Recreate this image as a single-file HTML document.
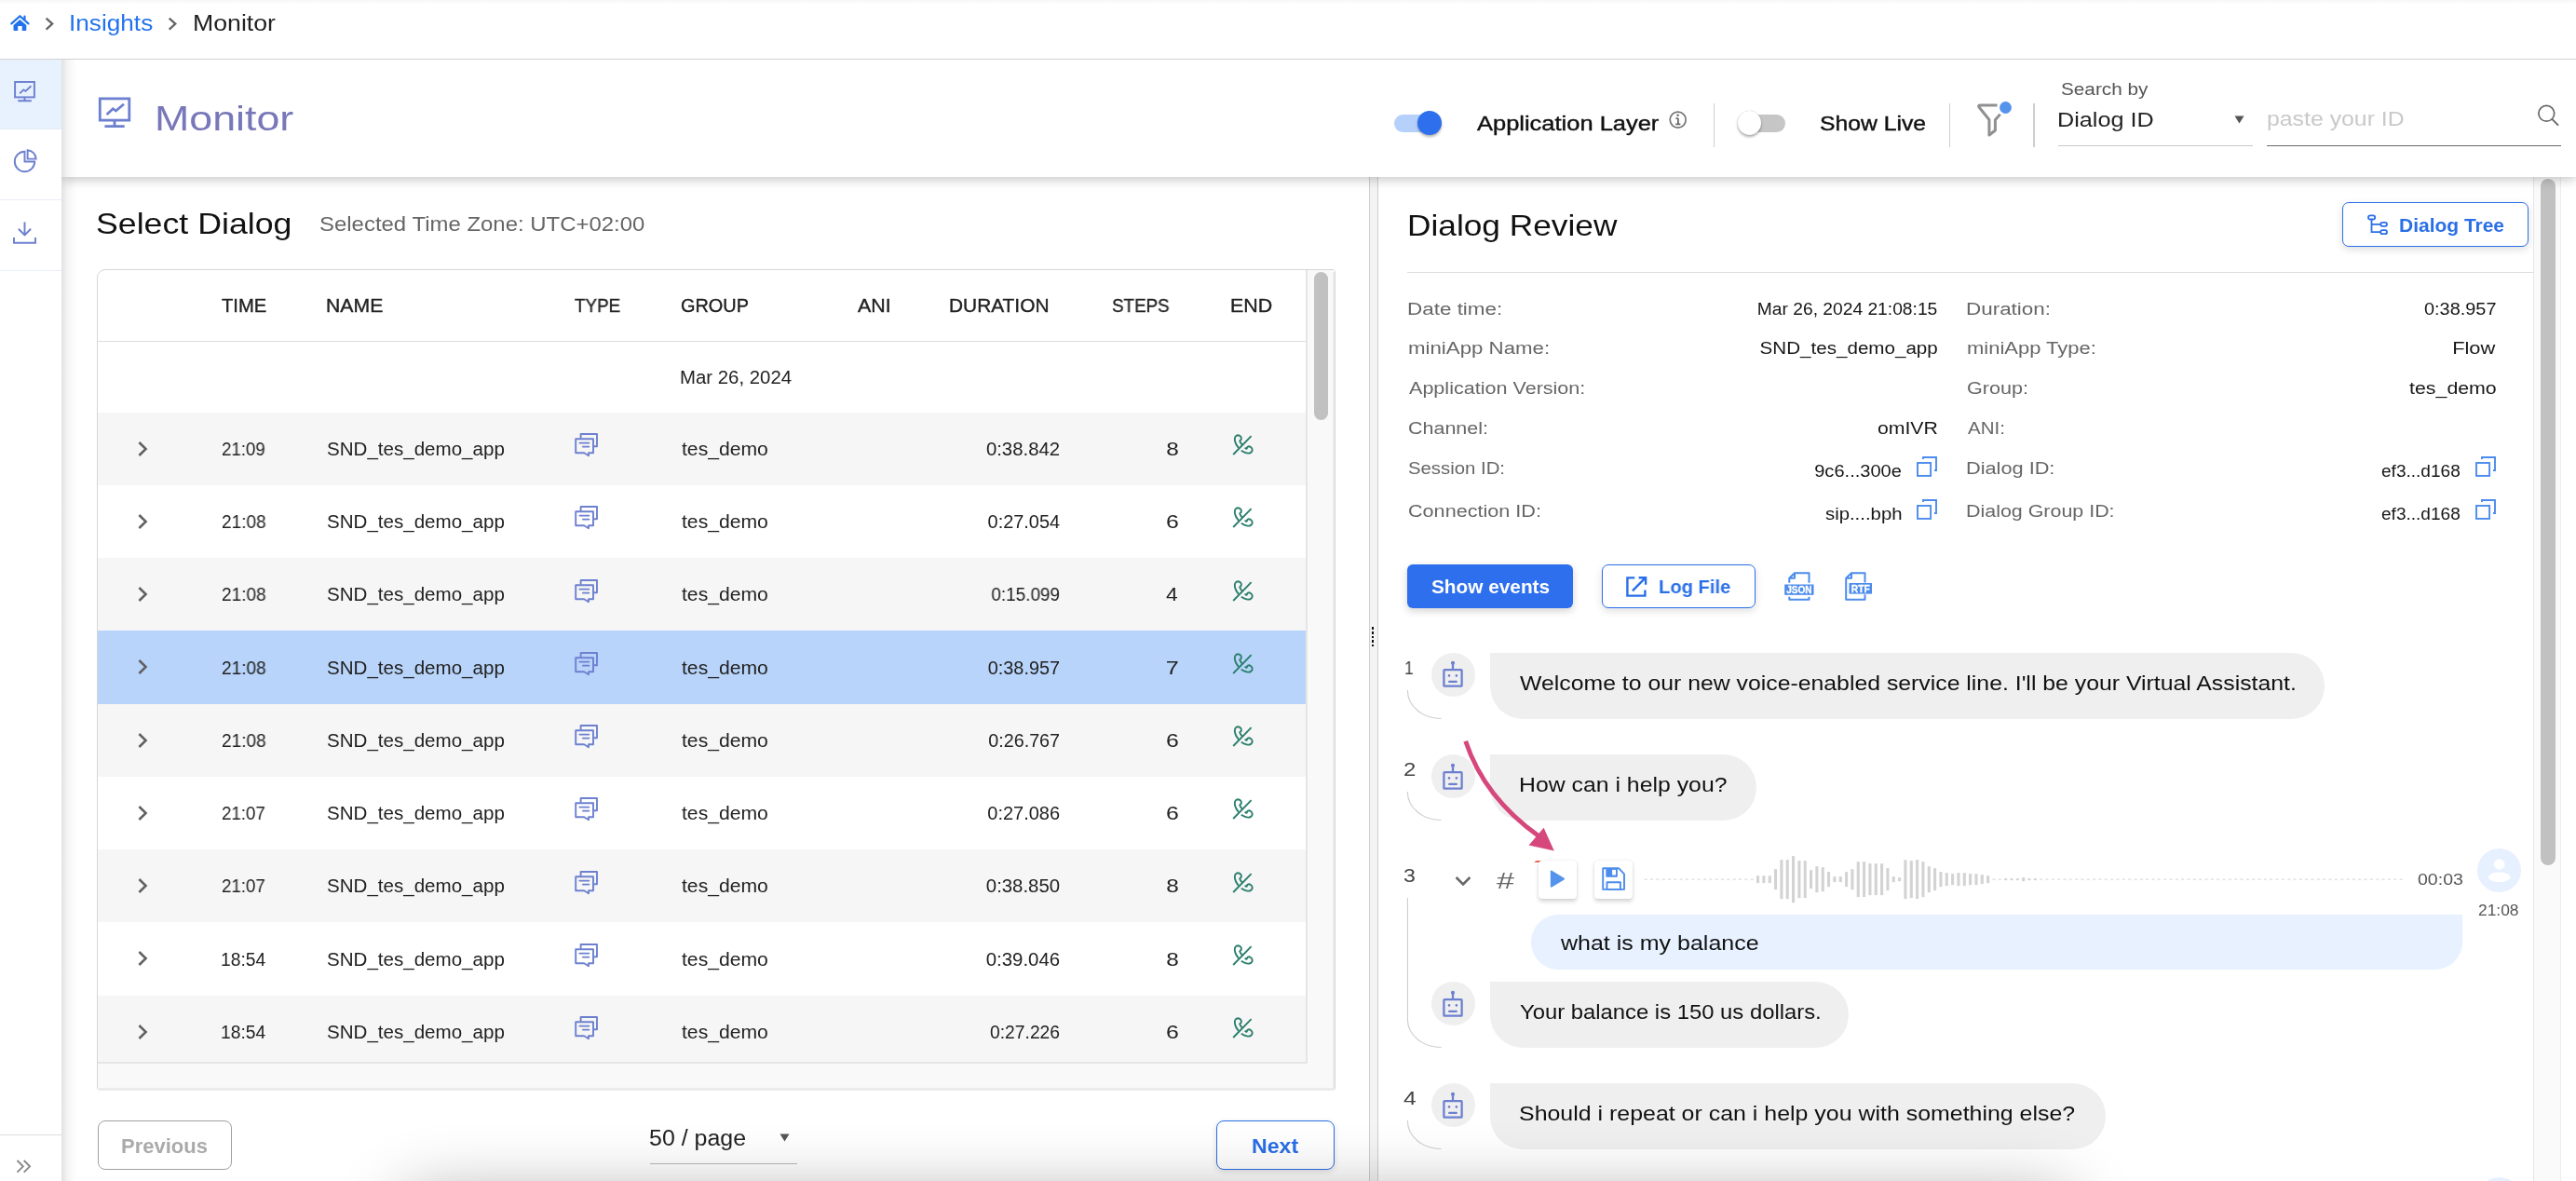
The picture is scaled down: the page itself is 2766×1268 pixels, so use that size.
<!DOCTYPE html>
<html lang="en"><head><meta charset="utf-8"><title>Monitor</title>
<style>
html{font-size:calc(100vw / 2766);}
html,body{margin:0;padding:0;background:#fff;}
body{width:2766rem;height:1268rem;position:relative;overflow:hidden;font-family:"Liberation Sans",sans-serif;}
.t{position:absolute;white-space:nowrap;line-height:1;margin:0;padding:0;will-change:transform;}
.b{position:absolute;box-sizing:border-box;display:block;}
svg{overflow:visible;}
</style></head><body>
<div class="b" style="left:66rem;top:64rem;width:16rem;height:1204rem;background:linear-gradient(90deg,rgba(0,0,0,.115),rgba(0,0,0,.045) 40%,rgba(0,0,0,0));"></div>
<section aria-label="Select Dialog">
<div class="t" style="top:226.00rem;font-size:30.88rem;color:#111;left:102.89rem;transform-origin:0 50%;transform:scaleX(1.1565);">Select Dialog</div>
<div class="t" style="top:230.00rem;font-size:21.71rem;color:#666;left:342.92rem;transform-origin:0 50%;transform:scaleX(1.1033);">Selected Time Zone: UTC+02:00</div>
<div class="b" style="left:104rem;top:289rem;width:1329.5rem;height:882rem;border:1rem solid #d6d6d6;border-radius:9rem 3rem 3rem 3rem;background:#fff;"></div>
<div class="b" style="left:105rem;top:366rem;width:1297.5rem;height:1rem;background:#dedede;"></div>
<div class="t" style="top:319.00rem;font-size:19.3rem;color:#222;-webkit-text-stroke:0.35rem #222;left:238.10rem;transform-origin:0 50%;transform:scaleX(1.0463);">TIME</div>
<div class="t" style="top:319.00rem;font-size:19.3rem;color:#222;-webkit-text-stroke:0.35rem #222;left:350.05rem;transform-origin:0 50%;transform:scaleX(1.0999);">NAME</div>
<div class="t" style="top:319.00rem;font-size:19.3rem;color:#222;-webkit-text-stroke:0.35rem #222;left:616.62rem;transform-origin:0 50%;transform:scaleX(0.9753);">TYPE</div>
<div class="t" style="top:319.00rem;font-size:19.3rem;color:#222;-webkit-text-stroke:0.35rem #222;left:731.00rem;transform-origin:0 50%;transform:scaleX(1.0319);">GROUP</div>
<div class="t" style="top:319.00rem;font-size:19.3rem;color:#222;-webkit-text-stroke:0.35rem #222;left:921.25rem;transform-origin:0 50%;transform:scaleX(1.1085);">ANI</div>
<div class="t" style="top:319.00rem;font-size:19.3rem;color:#222;-webkit-text-stroke:0.35rem #222;left:1019.08rem;transform-origin:0 50%;transform:scaleX(1.0830);">DURATION</div>
<div class="t" style="top:319.00rem;font-size:19.3rem;color:#222;-webkit-text-stroke:0.35rem #222;left:1194.15rem;transform-origin:0 50%;transform:scaleX(0.9745);">STEPS</div>
<div class="t" style="top:319.00rem;font-size:19.3rem;color:#222;-webkit-text-stroke:0.35rem #222;left:1320.79rem;transform-origin:0 50%;transform:scaleX(1.1094);">END</div>
<div class="t" style="top:396.00rem;font-size:19.3rem;color:#222;left:730.37rem;transform-origin:0 50%;transform:scaleX(1.0569);">Mar 26, 2024</div>
<div class="b" style="left:105rem;top:442.5rem;width:1297.5rem;height:78.25rem;background:#f6f6f6;"></div>
<svg class="b" style="left:146rem;top:471.7rem;width:16rem;height:20rem;" viewBox="0 0 16 20"><path d="M3.4 3L10.6 10L3.4 17" fill="none" stroke="#606060" stroke-width="2.5"/></svg>
<div class="t" style="top:473.00rem;font-size:19.3rem;color:#222;left:237.57rem;transform-origin:0 50%;transform:scaleX(0.9685);">21:09</div>
<div class="t" style="top:473.00rem;font-size:19.3rem;color:#222;left:350.82rem;transform-origin:0 50%;transform:scaleX(1.0661);">SND_tes_demo_app</div>
<svg class="b" style="left:617rem;top:465.0rem;width:25rem;height:25rem;" viewBox="0 0 25 25"><g fill="none" stroke="#6d80d0" stroke-width="1.9" stroke-linejoin="round" stroke-linecap="round">
<path d="M6.6 5V1H24V14.3H21.2"/>
<path d="M1.2 6.2H20V21.2H15V24.3L10.2 21.2H1.2Z"/>
<path d="M5.4 10.6H15.4M8.9 14.6H15.4"/>
</g></svg>
<div class="t" style="top:473.00rem;font-size:19.3rem;color:#222;left:731.68rem;transform-origin:0 50%;transform:scaleX(1.0966);">tes_demo</div>
<div class="t" style="top:473.00rem;font-size:19.3rem;color:#222;right:1627.53rem;transform-origin:100% 50%;transform:scaleX(1.0546);">0:38.842</div>
<div class="t" style="top:473.00rem;font-size:19.3rem;color:#222;right:1500.50rem;transform-origin:100% 50%;transform:scaleX(1.2611);">8</div>
<svg class="b" style="left:1315rem;top:460.0rem;width:40rem;height:35rem;" viewBox="0 0 1350 1181"><g fill="none" stroke="#2c7f6c" stroke-width="64" stroke-linecap="butt" stroke-linejoin="round">
<path d="M965 275L310 945"/>
<path d="M505 705C430 610 370 510 365 400C360 300 410 248 480 245C560 245 620 320 600 395L545 450C560 510 600 560 645 595"/>
<path d="M600 800C660 840 740 882 830 897C920 910 1000 860 1002 780C1002 690 900 630 838 662L790 738L728 700"/></g></svg>
<svg class="b" style="left:146rem;top:549.95rem;width:16rem;height:20rem;" viewBox="0 0 16 20"><path d="M3.4 3L10.6 10L3.4 17" fill="none" stroke="#606060" stroke-width="2.5"/></svg>
<div class="t" style="top:551.00rem;font-size:19.3rem;color:#222;left:237.55rem;transform-origin:0 50%;transform:scaleX(0.9879);">21:08</div>
<div class="t" style="top:551.00rem;font-size:19.3rem;color:#222;left:350.82rem;transform-origin:0 50%;transform:scaleX(1.0661);">SND_tes_demo_app</div>
<svg class="b" style="left:617rem;top:543.25rem;width:25rem;height:25rem;" viewBox="0 0 25 25"><g fill="none" stroke="#6d80d0" stroke-width="1.9" stroke-linejoin="round" stroke-linecap="round">
<path d="M6.6 5V1H24V14.3H21.2"/>
<path d="M1.2 6.2H20V21.2H15V24.3L10.2 21.2H1.2Z"/>
<path d="M5.4 10.6H15.4M8.9 14.6H15.4"/>
</g></svg>
<div class="t" style="top:551.00rem;font-size:19.3rem;color:#222;left:731.68rem;transform-origin:0 50%;transform:scaleX(1.0966);">tes_demo</div>
<div class="t" style="top:551.00rem;font-size:19.3rem;color:#222;right:1627.95rem;transform-origin:100% 50%;transform:scaleX(1.0322);">0:27.054</div>
<div class="t" style="top:551.00rem;font-size:19.3rem;color:#222;right:1500.41rem;transform-origin:100% 50%;transform:scaleX(1.2883);">6</div>
<svg class="b" style="left:1315rem;top:538.25rem;width:40rem;height:35rem;" viewBox="0 0 1350 1181"><g fill="none" stroke="#2c7f6c" stroke-width="64" stroke-linecap="butt" stroke-linejoin="round">
<path d="M965 275L310 945"/>
<path d="M505 705C430 610 370 510 365 400C360 300 410 248 480 245C560 245 620 320 600 395L545 450C560 510 600 560 645 595"/>
<path d="M600 800C660 840 740 882 830 897C920 910 1000 860 1002 780C1002 690 900 630 838 662L790 738L728 700"/></g></svg>
<div class="b" style="left:105rem;top:599.0rem;width:1297.5rem;height:78.25rem;background:#f6f6f6;"></div>
<svg class="b" style="left:146rem;top:628.2rem;width:16rem;height:20rem;" viewBox="0 0 16 20"><path d="M3.4 3L10.6 10L3.4 17" fill="none" stroke="#606060" stroke-width="2.5"/></svg>
<div class="t" style="top:629.00rem;font-size:19.3rem;color:#222;left:237.55rem;transform-origin:0 50%;transform:scaleX(0.9879);">21:08</div>
<div class="t" style="top:629.00rem;font-size:19.3rem;color:#222;left:350.82rem;transform-origin:0 50%;transform:scaleX(1.0661);">SND_tes_demo_app</div>
<svg class="b" style="left:617rem;top:621.5rem;width:25rem;height:25rem;" viewBox="0 0 25 25"><g fill="none" stroke="#6d80d0" stroke-width="1.9" stroke-linejoin="round" stroke-linecap="round">
<path d="M6.6 5V1H24V14.3H21.2"/>
<path d="M1.2 6.2H20V21.2H15V24.3L10.2 21.2H1.2Z"/>
<path d="M5.4 10.6H15.4M8.9 14.6H15.4"/>
</g></svg>
<div class="t" style="top:629.00rem;font-size:19.3rem;color:#222;left:731.68rem;transform-origin:0 50%;transform:scaleX(1.0966);">tes_demo</div>
<div class="t" style="top:629.00rem;font-size:19.3rem;color:#222;right:1627.64rem;transform-origin:100% 50%;transform:scaleX(0.9819);">0:15.099</div>
<div class="t" style="top:629.00rem;font-size:19.3rem;color:#222;right:1500.85rem;transform-origin:100% 50%;transform:scaleX(1.1799);">4</div>
<svg class="b" style="left:1315rem;top:616.5rem;width:40rem;height:35rem;" viewBox="0 0 1350 1181"><g fill="none" stroke="#2c7f6c" stroke-width="64" stroke-linecap="butt" stroke-linejoin="round">
<path d="M965 275L310 945"/>
<path d="M505 705C430 610 370 510 365 400C360 300 410 248 480 245C560 245 620 320 600 395L545 450C560 510 600 560 645 595"/>
<path d="M600 800C660 840 740 882 830 897C920 910 1000 860 1002 780C1002 690 900 630 838 662L790 738L728 700"/></g></svg>
<div class="b" style="left:105rem;top:677.25rem;width:1297.5rem;height:78.25rem;background:#b8d4fa;"></div>
<svg class="b" style="left:146rem;top:706.45rem;width:16rem;height:20rem;" viewBox="0 0 16 20"><path d="M3.4 3L10.6 10L3.4 17" fill="none" stroke="#606060" stroke-width="2.5"/></svg>
<div class="t" style="top:708.00rem;font-size:19.3rem;color:#222;left:237.55rem;transform-origin:0 50%;transform:scaleX(0.9879);">21:08</div>
<div class="t" style="top:708.00rem;font-size:19.3rem;color:#222;left:350.82rem;transform-origin:0 50%;transform:scaleX(1.0661);">SND_tes_demo_app</div>
<svg class="b" style="left:617rem;top:699.75rem;width:25rem;height:25rem;" viewBox="0 0 25 25"><g fill="none" stroke="#6d80d0" stroke-width="1.9" stroke-linejoin="round" stroke-linecap="round">
<path d="M6.6 5V1H24V14.3H21.2"/>
<path d="M1.2 6.2H20V21.2H15V24.3L10.2 21.2H1.2Z"/>
<path d="M5.4 10.6H15.4M8.9 14.6H15.4"/>
</g></svg>
<div class="t" style="top:708.00rem;font-size:19.3rem;color:#222;left:731.68rem;transform-origin:0 50%;transform:scaleX(1.0966);">tes_demo</div>
<div class="t" style="top:708.00rem;font-size:19.3rem;color:#222;right:1627.55rem;transform-origin:100% 50%;transform:scaleX(1.0301);">0:38.957</div>
<div class="t" style="top:708.00rem;font-size:19.3rem;color:#222;right:1500.28rem;transform-origin:100% 50%;transform:scaleX(1.3024);">7</div>
<svg class="b" style="left:1315rem;top:694.75rem;width:40rem;height:35rem;" viewBox="0 0 1350 1181"><g fill="none" stroke="#2c7f6c" stroke-width="64" stroke-linecap="butt" stroke-linejoin="round">
<path d="M965 275L310 945"/>
<path d="M505 705C430 610 370 510 365 400C360 300 410 248 480 245C560 245 620 320 600 395L545 450C560 510 600 560 645 595"/>
<path d="M600 800C660 840 740 882 830 897C920 910 1000 860 1002 780C1002 690 900 630 838 662L790 738L728 700"/></g></svg>
<div class="b" style="left:105rem;top:755.5rem;width:1297.5rem;height:78.25rem;background:#f6f6f6;"></div>
<svg class="b" style="left:146rem;top:784.7rem;width:16rem;height:20rem;" viewBox="0 0 16 20"><path d="M3.4 3L10.6 10L3.4 17" fill="none" stroke="#606060" stroke-width="2.5"/></svg>
<div class="t" style="top:786.00rem;font-size:19.3rem;color:#222;left:237.55rem;transform-origin:0 50%;transform:scaleX(0.9879);">21:08</div>
<div class="t" style="top:786.00rem;font-size:19.3rem;color:#222;left:350.82rem;transform-origin:0 50%;transform:scaleX(1.0661);">SND_tes_demo_app</div>
<svg class="b" style="left:617rem;top:778.0rem;width:25rem;height:25rem;" viewBox="0 0 25 25"><g fill="none" stroke="#6d80d0" stroke-width="1.9" stroke-linejoin="round" stroke-linecap="round">
<path d="M6.6 5V1H24V14.3H21.2"/>
<path d="M1.2 6.2H20V21.2H15V24.3L10.2 21.2H1.2Z"/>
<path d="M5.4 10.6H15.4M8.9 14.6H15.4"/>
</g></svg>
<div class="t" style="top:786.00rem;font-size:19.3rem;color:#222;left:731.68rem;transform-origin:0 50%;transform:scaleX(1.0966);">tes_demo</div>
<div class="t" style="top:786.00rem;font-size:19.3rem;color:#222;right:1627.56rem;transform-origin:100% 50%;transform:scaleX(1.0233);">0:26.767</div>
<div class="t" style="top:786.00rem;font-size:19.3rem;color:#222;right:1500.41rem;transform-origin:100% 50%;transform:scaleX(1.2883);">6</div>
<svg class="b" style="left:1315rem;top:773.0rem;width:40rem;height:35rem;" viewBox="0 0 1350 1181"><g fill="none" stroke="#2c7f6c" stroke-width="64" stroke-linecap="butt" stroke-linejoin="round">
<path d="M965 275L310 945"/>
<path d="M505 705C430 610 370 510 365 400C360 300 410 248 480 245C560 245 620 320 600 395L545 450C560 510 600 560 645 595"/>
<path d="M600 800C660 840 740 882 830 897C920 910 1000 860 1002 780C1002 690 900 630 838 662L790 738L728 700"/></g></svg>
<svg class="b" style="left:146rem;top:862.95rem;width:16rem;height:20rem;" viewBox="0 0 16 20"><path d="M3.4 3L10.6 10L3.4 17" fill="none" stroke="#606060" stroke-width="2.5"/></svg>
<div class="t" style="top:864.00rem;font-size:19.3rem;color:#222;left:237.56rem;transform-origin:0 50%;transform:scaleX(0.9695);">21:07</div>
<div class="t" style="top:864.00rem;font-size:19.3rem;color:#222;left:350.82rem;transform-origin:0 50%;transform:scaleX(1.0661);">SND_tes_demo_app</div>
<svg class="b" style="left:617rem;top:856.25rem;width:25rem;height:25rem;" viewBox="0 0 25 25"><g fill="none" stroke="#6d80d0" stroke-width="1.9" stroke-linejoin="round" stroke-linecap="round">
<path d="M6.6 5V1H24V14.3H21.2"/>
<path d="M1.2 6.2H20V21.2H15V24.3L10.2 21.2H1.2Z"/>
<path d="M5.4 10.6H15.4M8.9 14.6H15.4"/>
</g></svg>
<div class="t" style="top:864.00rem;font-size:19.3rem;color:#222;left:731.68rem;transform-origin:0 50%;transform:scaleX(1.0966);">tes_demo</div>
<div class="t" style="top:864.00rem;font-size:19.3rem;color:#222;right:1627.65rem;transform-origin:100% 50%;transform:scaleX(1.0356);">0:27.086</div>
<div class="t" style="top:864.00rem;font-size:19.3rem;color:#222;right:1500.41rem;transform-origin:100% 50%;transform:scaleX(1.2883);">6</div>
<svg class="b" style="left:1315rem;top:851.25rem;width:40rem;height:35rem;" viewBox="0 0 1350 1181"><g fill="none" stroke="#2c7f6c" stroke-width="64" stroke-linecap="butt" stroke-linejoin="round">
<path d="M965 275L310 945"/>
<path d="M505 705C430 610 370 510 365 400C360 300 410 248 480 245C560 245 620 320 600 395L545 450C560 510 600 560 645 595"/>
<path d="M600 800C660 840 740 882 830 897C920 910 1000 860 1002 780C1002 690 900 630 838 662L790 738L728 700"/></g></svg>
<div class="b" style="left:105rem;top:912.0rem;width:1297.5rem;height:78.25rem;background:#f6f6f6;"></div>
<svg class="b" style="left:146rem;top:941.2rem;width:16rem;height:20rem;" viewBox="0 0 16 20"><path d="M3.4 3L10.6 10L3.4 17" fill="none" stroke="#606060" stroke-width="2.5"/></svg>
<div class="t" style="top:942.00rem;font-size:19.3rem;color:#222;left:237.56rem;transform-origin:0 50%;transform:scaleX(0.9695);">21:07</div>
<div class="t" style="top:942.00rem;font-size:19.3rem;color:#222;left:350.82rem;transform-origin:0 50%;transform:scaleX(1.0661);">SND_tes_demo_app</div>
<svg class="b" style="left:617rem;top:934.5rem;width:25rem;height:25rem;" viewBox="0 0 25 25"><g fill="none" stroke="#6d80d0" stroke-width="1.9" stroke-linejoin="round" stroke-linecap="round">
<path d="M6.6 5V1H24V14.3H21.2"/>
<path d="M1.2 6.2H20V21.2H15V24.3L10.2 21.2H1.2Z"/>
<path d="M5.4 10.6H15.4M8.9 14.6H15.4"/>
</g></svg>
<div class="t" style="top:942.00rem;font-size:19.3rem;color:#222;left:731.68rem;transform-origin:0 50%;transform:scaleX(1.0966);">tes_demo</div>
<div class="t" style="top:942.00rem;font-size:19.3rem;color:#222;right:1627.73rem;transform-origin:100% 50%;transform:scaleX(1.0559);">0:38.850</div>
<div class="t" style="top:942.00rem;font-size:19.3rem;color:#222;right:1500.50rem;transform-origin:100% 50%;transform:scaleX(1.2611);">8</div>
<svg class="b" style="left:1315rem;top:929.5rem;width:40rem;height:35rem;" viewBox="0 0 1350 1181"><g fill="none" stroke="#2c7f6c" stroke-width="64" stroke-linecap="butt" stroke-linejoin="round">
<path d="M965 275L310 945"/>
<path d="M505 705C430 610 370 510 365 400C360 300 410 248 480 245C560 245 620 320 600 395L545 450C560 510 600 560 645 595"/>
<path d="M600 800C660 840 740 882 830 897C920 910 1000 860 1002 780C1002 690 900 630 838 662L790 738L728 700"/></g></svg>
<svg class="b" style="left:146rem;top:1019.45rem;width:16rem;height:20rem;" viewBox="0 0 16 20"><path d="M3.4 3L10.6 10L3.4 17" fill="none" stroke="#606060" stroke-width="2.5"/></svg>
<div class="t" style="top:1021.00rem;font-size:19.3rem;color:#222;left:237.06rem;transform-origin:0 50%;">18:54</div>
<div class="t" style="top:1021.00rem;font-size:19.3rem;color:#222;left:350.82rem;transform-origin:0 50%;transform:scaleX(1.0661);">SND_tes_demo_app</div>
<svg class="b" style="left:617rem;top:1012.75rem;width:25rem;height:25rem;" viewBox="0 0 25 25"><g fill="none" stroke="#6d80d0" stroke-width="1.9" stroke-linejoin="round" stroke-linecap="round">
<path d="M6.6 5V1H24V14.3H21.2"/>
<path d="M1.2 6.2H20V21.2H15V24.3L10.2 21.2H1.2Z"/>
<path d="M5.4 10.6H15.4M8.9 14.6H15.4"/>
</g></svg>
<div class="t" style="top:1021.00rem;font-size:19.3rem;color:#222;left:731.68rem;transform-origin:0 50%;transform:scaleX(1.0966);">tes_demo</div>
<div class="t" style="top:1021.00rem;font-size:19.3rem;color:#222;right:1627.63rem;transform-origin:100% 50%;transform:scaleX(1.0573);">0:39.046</div>
<div class="t" style="top:1021.00rem;font-size:19.3rem;color:#222;right:1500.50rem;transform-origin:100% 50%;transform:scaleX(1.2611);">8</div>
<svg class="b" style="left:1315rem;top:1007.75rem;width:40rem;height:35rem;" viewBox="0 0 1350 1181"><g fill="none" stroke="#2c7f6c" stroke-width="64" stroke-linecap="butt" stroke-linejoin="round">
<path d="M965 275L310 945"/>
<path d="M505 705C430 610 370 510 365 400C360 300 410 248 480 245C560 245 620 320 600 395L545 450C560 510 600 560 645 595"/>
<path d="M600 800C660 840 740 882 830 897C920 910 1000 860 1002 780C1002 690 900 630 838 662L790 738L728 700"/></g></svg>
<div class="b" style="left:105rem;top:1068.5rem;width:1297.5rem;height:71.5rem;background:#f6f6f6;"></div>
<svg class="b" style="left:146rem;top:1097.7rem;width:16rem;height:20rem;" viewBox="0 0 16 20"><path d="M3.4 3L10.6 10L3.4 17" fill="none" stroke="#606060" stroke-width="2.5"/></svg>
<div class="t" style="top:1099.00rem;font-size:19.3rem;color:#222;left:237.06rem;transform-origin:0 50%;">18:54</div>
<div class="t" style="top:1099.00rem;font-size:19.3rem;color:#222;left:350.82rem;transform-origin:0 50%;transform:scaleX(1.0661);">SND_tes_demo_app</div>
<svg class="b" style="left:617rem;top:1091.0rem;width:25rem;height:25rem;" viewBox="0 0 25 25"><g fill="none" stroke="#6d80d0" stroke-width="1.9" stroke-linejoin="round" stroke-linecap="round">
<path d="M6.6 5V1H24V14.3H21.2"/>
<path d="M1.2 6.2H20V21.2H15V24.3L10.2 21.2H1.2Z"/>
<path d="M5.4 10.6H15.4M8.9 14.6H15.4"/>
</g></svg>
<div class="t" style="top:1099.00rem;font-size:19.3rem;color:#222;left:731.68rem;transform-origin:0 50%;transform:scaleX(1.0966);">tes_demo</div>
<div class="t" style="top:1099.00rem;font-size:19.3rem;color:#222;right:1627.68rem;transform-origin:100% 50%;">0:27.226</div>
<div class="t" style="top:1099.00rem;font-size:19.3rem;color:#222;right:1500.41rem;transform-origin:100% 50%;transform:scaleX(1.2883);">6</div>
<svg class="b" style="left:1315rem;top:1086.0rem;width:40rem;height:35rem;" viewBox="0 0 1350 1181"><g fill="none" stroke="#2c7f6c" stroke-width="64" stroke-linecap="butt" stroke-linejoin="round">
<path d="M965 275L310 945"/>
<path d="M505 705C430 610 370 510 365 400C360 300 410 248 480 245C560 245 620 320 600 395L545 450C560 510 600 560 645 595"/>
<path d="M600 800C660 840 740 882 830 897C920 910 1000 860 1002 780C1002 690 900 630 838 662L790 738L728 700"/></g></svg>
<div class="b" style="left:105rem;top:1140rem;width:1327.5rem;height:30rem;background:#f9f9f9;"></div>
<div class="b" style="left:1402rem;top:290rem;width:30.5rem;height:851rem;background:#f9f9f9;"></div>
<div class="b" style="left:1401.7rem;top:290rem;width:1.9rem;height:851.6rem;background:#e5e5e5;"></div>
<div class="b" style="left:105rem;top:1139.8rem;width:1298.6rem;height:1.9rem;background:#e5e5e5;"></div>
<div class="b" style="left:1430.6rem;top:292rem;width:2.4rem;height:878rem;background:#ebebeb;"></div>
<div class="b" style="left:106rem;top:1168.4rem;width:1327rem;height:2.4rem;background:#ebebeb;"></div>
<div class="b" style="left:1410.5rem;top:292rem;width:15.5rem;height:158.5rem;background:#c1c1c1;border-radius:8rem;"></div>
<div class="b" style="left:104.5rem;top:1203rem;width:144.5rem;height:52.5rem;border:1.6rem solid #a0a0a0;border-radius:8rem;background:#fff;"></div>
<div class="t" style="top:1220.00rem;font-size:21.67rem;color:#aaa;font-weight:700;left:129.57rem;transform-origin:0 50%;transform:scaleX(1.0165);">Previous</div>
<div class="t" style="top:1211.00rem;font-size:23.16rem;color:#222;left:697.00rem;transform-origin:0 50%;transform:scaleX(1.0775);">50 / page</div>
<svg class="b" style="left:837rem;top:1217rem;width:11rem;height:9rem;" viewBox="0 0 11 9"><path d="M0.5 0.5H10.5L5.5 8.5Z" fill="#555"/></svg>
<div class="b" style="left:698rem;top:1248.5rem;width:158rem;height:1rem;background:#b8b8b8;"></div>
<div class="b" style="left:1306rem;top:1203rem;width:126.5rem;height:52.5rem;border:1.3rem solid #2a6fe8;border-radius:8rem;background:#fff;box-shadow:0 2rem 6rem rgba(0,0,0,.12);"></div>
<div class="t" style="top:1220.00rem;font-size:21.67rem;color:#2a6fe8;font-weight:700;left:1343.90rem;transform-origin:0 50%;transform:scaleX(1.0674);">Next</div>
</section>
<div class="b" style="left:1470rem;top:190rem;width:10rem;height:1078rem;background:#f4f4f4;border-left:1rem solid #cfcfcf;border-right:1rem solid #cfcfcf;"></div>
<div class="b" style="left:1472.6rem;top:673.3rem;width:2.8rem;height:2.8rem;background:#111;"></div>
<div class="b" style="left:1472.6rem;top:677.9rem;width:2.8rem;height:2.8rem;background:#111;"></div>
<div class="b" style="left:1472.6rem;top:682.5rem;width:2.8rem;height:2.8rem;background:#111;"></div>
<div class="b" style="left:1472.6rem;top:687.0999999999999rem;width:2.8rem;height:2.8rem;background:#111;"></div>
<div class="b" style="left:1472.6rem;top:691.6999999999999rem;width:2.8rem;height:2.8rem;background:#111;"></div>
<section aria-label="Dialog Review">
<div class="t" style="top:228.00rem;font-size:30.88rem;color:#111;left:1511.38rem;transform-origin:0 50%;transform:scaleX(1.1423);">Dialog Review</div>
<div class="b" style="left:2515rem;top:217rem;width:200rem;height:47.7rem;border:1.2rem solid #2a6fe8;border-radius:7rem;background:#fff;box-shadow:0 3rem 8rem rgba(0,0,0,.13);"></div>
<svg class="b" style="left:2540rem;top:228rem;width:26rem;height:26rem;" viewBox="2540 228 26 26"><g fill="none" stroke="#2a6fe8" stroke-width="1.8">
<rect x="2543" y="231.3" width="7.2" height="4.2" rx="2.1"/>
<rect x="2556.2" y="238.8" width="6.8" height="4" rx="2"/>
<rect x="2556.2" y="247.2" width="6.8" height="4" rx="2"/>
<path d="M2546.5 235.5V249.2H2556.2M2546.5 240.8H2556.2"/></g></svg>
<div class="t" style="top:232.00rem;font-size:20.68rem;color:#2a6fe8;font-weight:700;left:2576.14rem;transform-origin:0 50%;transform:scaleX(1.0142);">Dialog Tree</div>
<div class="b" style="left:1511rem;top:292rem;width:1209rem;height:1rem;background:#dedede;"></div>
<div class="t" style="top:323.00rem;font-size:18.62rem;color:#666;left:1511.20rem;transform-origin:0 50%;transform:scaleX(1.2057);">Date time:</div>
<div class="t" style="top:323.00rem;font-size:18.62rem;color:#161616;right:685.71rem;transform-origin:100% 50%;transform:scaleX(1.0331);">Mar 26, 2024 21:08:15</div>
<div class="t" style="top:323.00rem;font-size:18.62rem;color:#666;left:2111.20rem;transform-origin:0 50%;transform:scaleX(1.2054);">Duration:</div>
<div class="t" style="top:323.00rem;font-size:18.62rem;color:#161616;right:85.55rem;transform-origin:100% 50%;transform:scaleX(1.0685);">0:38.957</div>
<div class="t" style="top:365.00rem;font-size:18.62rem;color:#666;left:1511.55rem;transform-origin:0 50%;transform:scaleX(1.1959);">miniApp Name:</div>
<div class="t" style="top:365.00rem;font-size:18.62rem;color:#161616;right:685.65rem;transform-origin:100% 50%;transform:scaleX(1.1065);">SND_tes_demo_app</div>
<div class="t" style="top:365.00rem;font-size:18.62rem;color:#666;left:2111.57rem;transform-origin:0 50%;transform:scaleX(1.1809);">miniApp Type:</div>
<div class="t" style="top:365.00rem;font-size:18.62rem;color:#161616;right:86.58rem;transform-origin:100% 50%;transform:scaleX(1.1744);">Flow</div>
<div class="t" style="top:408.00rem;font-size:18.62rem;color:#666;left:1513.00rem;transform-origin:0 50%;transform:scaleX(1.1584);">Application Version:</div>
<div class="t" style="top:408.00rem;font-size:18.62rem;color:#666;left:2111.92rem;transform-origin:0 50%;transform:scaleX(1.1597);">Group:</div>
<div class="t" style="top:408.00rem;font-size:18.62rem;color:#161616;right:85.61rem;transform-origin:100% 50%;transform:scaleX(1.1460);">tes_demo</div>
<div class="t" style="top:451.00rem;font-size:18.62rem;color:#666;left:1511.93rem;transform-origin:0 50%;transform:scaleX(1.1541);">Channel:</div>
<div class="t" style="top:451.00rem;font-size:18.62rem;color:#161616;right:685.57rem;transform-origin:100% 50%;transform:scaleX(1.1428);">omIVR</div>
<div class="t" style="top:451.00rem;font-size:18.62rem;color:#666;left:2113.00rem;transform-origin:0 50%;transform:scaleX(1.1002);">ANI:</div>
<div class="t" style="top:494.00rem;font-size:18.62rem;color:#666;left:1512.08rem;transform-origin:0 50%;transform:scaleX(1.0925);">Session ID:</div>
<div class="t" style="top:497.00rem;font-size:18.62rem;color:#161616;right:723.88rem;transform-origin:100% 50%;transform:scaleX(1.0782);">9c6...300e</div>
<svg class="b" style="left:2058rem;top:490rem;width:22rem;height:22rem;" viewBox="0 0 22 22"><g fill="none" stroke="#4c8cec" stroke-width="1.9"><rect x="1" y="7" width="14.1" height="13.9"/><path d="M7 2.9V1H21V15H19"/></g></svg>
<div class="t" style="top:494.00rem;font-size:18.62rem;color:#666;left:2111.26rem;transform-origin:0 50%;transform:scaleX(1.1677);">Dialog ID:</div>
<div class="t" style="top:497.00rem;font-size:18.62rem;color:#161616;right:123.97rem;transform-origin:100% 50%;transform:scaleX(1.0243);">ef3...d168</div>
<svg class="b" style="left:2658rem;top:490rem;width:22rem;height:22rem;" viewBox="0 0 22 22"><g fill="none" stroke="#4c8cec" stroke-width="1.9"><rect x="1" y="7" width="14.1" height="13.9"/><path d="M7 2.9V1H21V15H19"/></g></svg>
<div class="t" style="top:540.00rem;font-size:18.62rem;color:#666;left:1511.92rem;transform-origin:0 50%;transform:scaleX(1.1612);">Connection ID:</div>
<div class="t" style="top:543.00rem;font-size:18.62rem;color:#161616;right:723.46rem;transform-origin:100% 50%;transform:scaleX(1.0931);">sip....bph</div>
<svg class="b" style="left:2058rem;top:536.25rem;width:22rem;height:22rem;" viewBox="0 0 22 22"><g fill="none" stroke="#4c8cec" stroke-width="1.9"><rect x="1" y="7" width="14.1" height="13.9"/><path d="M7 2.9V1H21V15H19"/></g></svg>
<div class="t" style="top:540.00rem;font-size:18.62rem;color:#666;left:2111.29rem;transform-origin:0 50%;transform:scaleX(1.1512);">Dialog Group ID:</div>
<div class="t" style="top:543.00rem;font-size:18.62rem;color:#161616;right:123.97rem;transform-origin:100% 50%;transform:scaleX(1.0243);">ef3...d168</div>
<svg class="b" style="left:2658rem;top:536.25rem;width:22rem;height:22rem;" viewBox="0 0 22 22"><g fill="none" stroke="#4c8cec" stroke-width="1.9"><rect x="1" y="7" width="14.1" height="13.9"/><path d="M7 2.9V1H21V15H19"/></g></svg>
<div class="b" style="left:1511rem;top:606.2rem;width:178rem;height:46.6rem;background:#2d6fec;border-radius:6rem;box-shadow:0 3rem 8rem rgba(0,0,0,.18);"></div>
<div class="t" style="top:620.00rem;font-size:20.68rem;color:#fff;font-weight:700;left:1536.73rem;transform-origin:0 50%;transform:scaleX(1.0059);">Show events</div>
<div class="b" style="left:1720.2rem;top:606.2rem;width:164.7rem;height:46.6rem;border:1.2rem solid #2a6fe8;border-radius:7rem;background:#fff;box-shadow:0 3rem 8rem rgba(0,0,0,.13);"></div>
<svg class="b" style="left:1744rem;top:617rem;width:26rem;height:26rem;" viewBox="1744 617 26 26"><g fill="none" stroke="#2a6fe8" stroke-width="2.4"><path d="M1755.3 620.4H1747.4V639.6H1766.4V633.4"/><path d="M1752.9 634.3L1767 620.2M1759.6 620.3H1767.1V627.8"/></g></svg>
<div class="t" style="top:620.00rem;font-size:20.68rem;color:#2a6fe8;font-weight:700;left:1781.39rem;transform-origin:0 50%;transform:scaleX(0.9749);">Log File</div>
<svg class="b" style="left:1914rem;top:612rem;width:36rem;height:35rem;will-change:transform;" viewBox="1914 612 36 35"><g fill="none" stroke="#4c8cec" stroke-width="2" stroke-linejoin="round">
<path d="M1921.3 625.8V620.8L1927 615.3H1942.5V625.8M1921.3 620.8H1927V615.3"/>
<path d="M1921.3 640.8V643.8H1942.5V640.8"/></g>
<rect x="1916.2" y="627.5" width="31.3" height="11.3" fill="#4c8cec"/>
<text x="1931.9" y="637" text-anchor="middle" font-family="'Liberation Sans', sans-serif" font-weight="700" font-size="10" fill="#fff" stroke="#fff" stroke-width="0.3" textLength="27.5" lengthAdjust="spacingAndGlyphs">JSON</text></svg>
<svg class="b" style="left:1978rem;top:612rem;width:36rem;height:35rem;will-change:transform;" viewBox="1978 612 36 35"><g fill="none" stroke="#4c8cec" stroke-width="2" stroke-linejoin="round">
<path d="M2002.5 625.5V615.3H1988L1982.2 620.8V643.8H2002.5V638.2M1982.2 620.8H1988V615.3"/></g>
<rect x="1985.5" y="626" width="24.5" height="11.6" fill="#4c8cec"/>
<text x="1997.8" y="635.7" text-anchor="middle" font-family="'Liberation Sans', sans-serif" font-weight="700" font-size="10" fill="#fff" stroke="#fff" stroke-width="0.3" textLength="20" lengthAdjust="spacingAndGlyphs">RTF</text></svg>
<div class="t" style="top:708.00rem;font-size:19.3rem;color:#444;left:1507.50rem;transform-origin:0 50%;transform:scaleX(0.8985);">1</div>
<div class="b" style="left:1537.0rem;top:701.0rem;width:46.8rem;height:46.8rem;background:#efefef;border-radius:50%;"></div>
<svg class="b" style="left:1546.4rem;top:707.4rem;width:28rem;height:34rem;" viewBox="1546.2 707.4 28 34"><g fill="none" stroke="#6d80d0" stroke-width="2.3">
<rect x="1550.6" y="719.5" width="19.2" height="17.6" rx="0.8"/><path d="M1560.2 713V719.6"/><path d="M1556.4 732.3H1564" stroke-linecap="round"/></g>
<circle cx="1560.2" cy="712.2" r="2.1" fill="#6d80d0"/><circle cx="1556.2" cy="725.8" r="1.3" fill="#6d80d0"/><circle cx="1564.1" cy="725.8" r="1.3" fill="#6d80d0"/></svg>
<div class="b" style="left:1600rem;top:700.9rem;width:895.5rem;height:70.8rem;background:#efefef;border-radius:0 35.4rem 35.4rem 35.4rem;"></div>
<div class="t" style="top:723.00rem;font-size:22.2rem;color:#111;left:1632.44rem;transform-origin:0 50%;transform:scaleX(1.1180);">Welcome to our new voice-enabled service line. I'll be your Virtual Assistant.</div>
<svg class="b" style="left:1505rem;top:739rem;width:50rem;height:36.5rem;" viewBox="1505 739 50 36.5"><path d="M1511.4 741V741.5A36 30 0 0 0 1547.5 771.5" fill="none" stroke="#cdcdcd" stroke-width="1.1"/></svg>
<div class="t" style="top:817.00rem;font-size:19.3rem;color:#444;left:1506.80rem;transform-origin:0 50%;transform:scaleX(1.2458);">2</div>
<div class="b" style="left:1537.0rem;top:810.1rem;width:46.8rem;height:46.8rem;background:#efefef;border-radius:50%;"></div>
<svg class="b" style="left:1546.4rem;top:816.5rem;width:28rem;height:34rem;" viewBox="1546.2 707.4 28 34"><g fill="none" stroke="#6d80d0" stroke-width="2.3">
<rect x="1550.6" y="719.5" width="19.2" height="17.6" rx="0.8"/><path d="M1560.2 713V719.6"/><path d="M1556.4 732.3H1564" stroke-linecap="round"/></g>
<circle cx="1560.2" cy="712.2" r="2.1" fill="#6d80d0"/><circle cx="1556.2" cy="725.8" r="1.3" fill="#6d80d0"/><circle cx="1564.1" cy="725.8" r="1.3" fill="#6d80d0"/></svg>
<div class="b" style="left:1600rem;top:810rem;width:285.75rem;height:70.8rem;background:#efefef;border-radius:0 35.4rem 35.4rem 35.4rem;"></div>
<div class="t" style="top:832.00rem;font-size:22.2rem;color:#111;left:1630.51rem;transform-origin:0 50%;transform:scaleX(1.1185);">How can i help you?</div>
<svg class="b" style="left:1505rem;top:848rem;width:50rem;height:36.5rem;" viewBox="1505 848 50 36.5"><path d="M1511.4 850V850.5A36 30 0 0 0 1547.5 880.5" fill="none" stroke="#cdcdcd" stroke-width="1.1"/></svg>
<div class="t" style="top:931.00rem;font-size:19.3rem;color:#444;left:1506.63rem;transform-origin:0 50%;transform:scaleX(1.1999);">3</div>
<svg class="b" style="left:1560rem;top:938rem;width:22rem;height:16rem;" viewBox="0 0 22 16"><path d="M3.6 4L11 11.4L18.4 4" fill="none" stroke="#666" stroke-width="2.5"/></svg>
<div class="t" style="top:935.00rem;font-size:23.16rem;color:#666;left:1607.41rem;transform-origin:0 50%;transform:scaleX(1.4759);">#</div>
<div class="b" style="left:1648rem;top:923.6rem;width:8rem;height:2.2rem;background:#e8604c;border-radius:2rem 0 0 0;transform:skewX(-30deg);"></div>
<div class="b" style="left:1652rem;top:923.6rem;width:41rem;height:41.2rem;background:#fff;border-radius:4rem;box-shadow:0 2.5rem 4rem rgba(0,0,0,.16),0 0 2rem rgba(0,0,0,.08);"></div>
<svg class="b" style="left:1662rem;top:931rem;width:22rem;height:25rem;" viewBox="1662 931 22 25"><path d="M1665.8 935.5V951.7L1679 943.6Z" fill="#5593ec" stroke="#5593ec" stroke-width="2" stroke-linejoin="round"/></svg>
<div class="b" style="left:1712rem;top:923.6rem;width:41.2rem;height:41.2rem;background:#fff;border-radius:4rem;box-shadow:0 2.5rem 4rem rgba(0,0,0,.16),0 0 2rem rgba(0,0,0,.08);"></div>
<svg class="b" style="left:1718rem;top:929rem;width:29rem;height:29rem;" viewBox="1718 929 29 29"><g fill="none" stroke="#4c8cec" stroke-width="1.9" stroke-linejoin="round">
<path d="M1721.2 932.2H1738L1744 938.3V954.9H1721.2Z"/>
<rect x="1725.3" y="933" width="10.6" height="7.9" fill="#4c8cec"/>
<rect x="1725.5" y="947.2" width="14.4" height="7.7"/></g>
<rect x="1731.1" y="933.9" width="3.9" height="5.6" fill="#fff"/></svg>
<svg class="b" style="left:1760rem;top:915rem;width:830rem;height:60rem;" viewBox="1760 915 830 60"><g fill="#d3d3d3"><rect x="1765.63" y="943.65" width="3.1" height="1"/><rect x="1771.97" y="943.65" width="3.1" height="1"/><rect x="1778.31" y="943.65" width="3.1" height="1"/><rect x="1784.64" y="943.65" width="3.1" height="1"/><rect x="1790.98" y="943.65" width="3.1" height="1"/><rect x="1797.31" y="943.65" width="3.1" height="1"/><rect x="1803.65" y="943.65" width="3.1" height="1"/><rect x="1809.98" y="943.65" width="3.1" height="1"/><rect x="1816.32" y="943.65" width="3.1" height="1"/><rect x="1822.65" y="943.65" width="3.1" height="1"/><rect x="1828.99" y="943.65" width="3.1" height="1"/><rect x="1835.32" y="943.65" width="3.1" height="1"/><rect x="1841.66" y="943.65" width="3.1" height="1"/><rect x="1847.99" y="943.65" width="3.1" height="1"/><rect x="1854.33" y="943.65" width="3.1" height="1"/><rect x="1860.66" y="943.65" width="3.1" height="1"/><rect x="1867.00" y="943.65" width="3.1" height="1"/><rect x="1873.33" y="943.65" width="3.1" height="1"/><rect x="1879.67" y="943.65" width="3.1" height="1"/><rect x="1886.00" y="940.25" width="3.1" height="7.8"/><rect x="1892.34" y="940.25" width="3.1" height="7.8"/><rect x="1898.67" y="940.25" width="3.1" height="7.8"/><rect x="1905.01" y="933.15" width="3.1" height="22"/><rect x="1911.34" y="923.15" width="3.1" height="42"/><rect x="1917.68" y="923.15" width="3.1" height="42"/><rect x="1924.01" y="919.15" width="3.1" height="50"/><rect x="1930.35" y="924.15" width="3.1" height="40"/><rect x="1936.68" y="924.15" width="3.1" height="40"/><rect x="1943.02" y="934.15" width="3.1" height="20"/><rect x="1949.35" y="930.15" width="3.1" height="28"/><rect x="1955.69" y="931.15" width="3.1" height="26"/><rect x="1962.02" y="936.15" width="3.1" height="16"/><rect x="1968.36" y="941.15" width="3.1" height="6"/><rect x="1974.69" y="941.15" width="3.1" height="6"/><rect x="1981.03" y="936.15" width="3.1" height="16"/><rect x="1987.36" y="933.15" width="3.1" height="22"/><rect x="1993.70" y="925.15" width="3.1" height="38"/><rect x="2000.03" y="925.15" width="3.1" height="38"/><rect x="2006.37" y="927.15" width="3.1" height="34"/><rect x="2012.70" y="927.15" width="3.1" height="34"/><rect x="2019.04" y="927.15" width="3.1" height="34"/><rect x="2025.37" y="932.15" width="3.1" height="24"/><rect x="2031.71" y="941.15" width="3.1" height="6"/><rect x="2038.04" y="942.15" width="3.1" height="4"/><rect x="2044.38" y="923.15" width="3.1" height="42"/><rect x="2050.71" y="924.15" width="3.1" height="40"/><rect x="2057.05" y="923.15" width="3.1" height="42"/><rect x="2063.38" y="925.15" width="3.1" height="38"/><rect x="2069.72" y="930.15" width="3.1" height="28"/><rect x="2076.05" y="932.15" width="3.1" height="24"/><rect x="2082.39" y="936.15" width="3.1" height="16"/><rect x="2088.72" y="937.15" width="3.1" height="14"/><rect x="2095.06" y="938.15" width="3.1" height="12"/><rect x="2101.39" y="937.15" width="3.1" height="14"/><rect x="2107.73" y="937.15" width="3.1" height="14"/><rect x="2114.06" y="938.15" width="3.1" height="12"/><rect x="2120.40" y="938.15" width="3.1" height="12"/><rect x="2126.73" y="939.15" width="3.1" height="10"/><rect x="2133.07" y="940.15" width="3.1" height="8"/><rect x="2139.40" y="943.65" width="3.1" height="1"/><rect x="2145.74" y="943.65" width="3.1" height="1"/><rect x="2152.07" y="943.15" width="3.1" height="2"/><rect x="2158.41" y="943.15" width="3.1" height="2"/><rect x="2164.74" y="943.15" width="3.1" height="2"/><rect x="2171.08" y="942.15" width="3.1" height="4"/><rect x="2177.41" y="943.15" width="3.1" height="2"/><rect x="2183.75" y="943.15" width="3.1" height="2"/><rect x="2190.08" y="943.65" width="3.1" height="1"/><rect x="2196.42" y="943.65" width="3.1" height="1"/><rect x="2202.75" y="943.65" width="3.1" height="1"/><rect x="2209.09" y="943.65" width="3.1" height="1"/><rect x="2215.42" y="943.65" width="3.1" height="1"/><rect x="2221.76" y="943.65" width="3.1" height="1"/><rect x="2228.09" y="943.65" width="3.1" height="1"/><rect x="2234.43" y="943.65" width="3.1" height="1"/><rect x="2240.76" y="943.65" width="3.1" height="1"/><rect x="2247.10" y="943.65" width="3.1" height="1"/><rect x="2253.43" y="943.65" width="3.1" height="1"/><rect x="2259.77" y="943.65" width="3.1" height="1"/><rect x="2266.10" y="943.65" width="3.1" height="1"/><rect x="2272.44" y="943.65" width="3.1" height="1"/><rect x="2278.77" y="943.65" width="3.1" height="1"/><rect x="2285.11" y="943.65" width="3.1" height="1"/><rect x="2291.44" y="943.65" width="3.1" height="1"/><rect x="2297.78" y="943.65" width="3.1" height="1"/><rect x="2304.11" y="943.65" width="3.1" height="1"/><rect x="2310.45" y="943.65" width="3.1" height="1"/><rect x="2316.78" y="943.65" width="3.1" height="1"/><rect x="2323.12" y="943.65" width="3.1" height="1"/><rect x="2329.45" y="943.65" width="3.1" height="1"/><rect x="2335.79" y="943.65" width="3.1" height="1"/><rect x="2342.12" y="943.65" width="3.1" height="1"/><rect x="2348.46" y="943.65" width="3.1" height="1"/><rect x="2354.79" y="943.65" width="3.1" height="1"/><rect x="2361.13" y="943.65" width="3.1" height="1"/><rect x="2367.46" y="943.65" width="3.1" height="1"/><rect x="2373.80" y="943.65" width="3.1" height="1"/><rect x="2380.13" y="943.65" width="3.1" height="1"/><rect x="2386.47" y="943.65" width="3.1" height="1"/><rect x="2392.80" y="943.65" width="3.1" height="1"/><rect x="2399.14" y="943.65" width="3.1" height="1"/><rect x="2405.47" y="943.65" width="3.1" height="1"/><rect x="2411.81" y="943.65" width="3.1" height="1"/><rect x="2418.14" y="943.65" width="3.1" height="1"/><rect x="2424.48" y="943.65" width="3.1" height="1"/><rect x="2430.81" y="943.65" width="3.1" height="1"/><rect x="2437.15" y="943.65" width="3.1" height="1"/><rect x="2443.48" y="943.65" width="3.1" height="1"/><rect x="2449.82" y="943.65" width="3.1" height="1"/><rect x="2456.15" y="943.65" width="3.1" height="1"/><rect x="2462.49" y="943.65" width="3.1" height="1"/><rect x="2468.82" y="943.65" width="3.1" height="1"/><rect x="2475.16" y="943.65" width="3.1" height="1"/><rect x="2481.49" y="943.65" width="3.1" height="1"/><rect x="2487.83" y="943.65" width="3.1" height="1"/><rect x="2494.16" y="943.65" width="3.1" height="1"/><rect x="2500.50" y="943.65" width="3.1" height="1"/><rect x="2506.83" y="943.65" width="3.1" height="1"/><rect x="2513.17" y="943.65" width="3.1" height="1"/><rect x="2519.50" y="943.65" width="3.1" height="1"/><rect x="2525.84" y="943.65" width="3.1" height="1"/><rect x="2532.17" y="943.65" width="3.1" height="1"/><rect x="2538.51" y="943.65" width="3.1" height="1"/><rect x="2544.84" y="943.65" width="3.1" height="1"/><rect x="2551.18" y="943.65" width="3.1" height="1"/><rect x="2557.51" y="943.65" width="3.1" height="1"/><rect x="2563.85" y="943.65" width="3.1" height="1"/><rect x="2570.18" y="943.65" width="3.1" height="1"/><rect x="2576.52" y="943.65" width="3.1" height="1"/></g></svg>
<div class="t" style="top:936.00rem;font-size:17.37rem;color:#555;left:2595.97rem;transform-origin:0 50%;transform:scaleX(1.1241);">00:03</div>
<div class="b" style="left:2660.2rem;top:911rem;width:47rem;height:47rem;background:#e6f0ff;border-radius:50%;"></div>
<svg class="b" style="left:2660.2rem;top:911rem;width:47rem;height:47rem;" viewBox="2660.2 911 47 47"><circle cx="2683.9" cy="928" r="5.8" fill="#fff"/><ellipse cx="2683.9" cy="941.7" rx="11.8" ry="5.4" fill="#fff"/></svg>
<div class="t" style="top:969.00rem;font-size:17.37rem;color:#555;left:2661.43rem;transform-origin:0 50%;">21:08</div>
<svg class="b" style="left:1505rem;top:961.8rem;width:50rem;height:166.5rem;" viewBox="1505 961.8 50 166.5"><path d="M1511.4 963.8V1094.3A36 30 0 0 0 1547.5 1124.3" fill="none" stroke="#cdcdcd" stroke-width="1.1"/></svg>
<div class="b" style="left:1644.3rem;top:982rem;width:999.7rem;height:58.7rem;background:#e7f1ff;border-radius:29.4rem 0 29.4rem 29.4rem;"></div>
<div class="t" style="top:1002.00rem;font-size:22.2rem;color:#111;left:1676.36rem;transform-origin:0 50%;transform:scaleX(1.1269);">what is my balance</div>
<div class="b" style="left:1537.0rem;top:1054.35rem;width:46.8rem;height:46.8rem;background:#efefef;border-radius:50%;"></div>
<svg class="b" style="left:1546.4rem;top:1060.75rem;width:28rem;height:34rem;" viewBox="1546.2 707.4 28 34"><g fill="none" stroke="#6d80d0" stroke-width="2.3">
<rect x="1550.6" y="719.5" width="19.2" height="17.6" rx="0.8"/><path d="M1560.2 713V719.6"/><path d="M1556.4 732.3H1564" stroke-linecap="round"/></g>
<circle cx="1560.2" cy="712.2" r="2.1" fill="#6d80d0"/><circle cx="1556.2" cy="725.8" r="1.3" fill="#6d80d0"/><circle cx="1564.1" cy="725.8" r="1.3" fill="#6d80d0"/></svg>
<div class="b" style="left:1600rem;top:1054.25rem;width:385rem;height:70.8rem;background:#efefef;border-radius:0 35.4rem 35.4rem 35.4rem;"></div>
<div class="t" style="top:1076.00rem;font-size:22.2rem;color:#111;left:1632.02rem;transform-origin:0 50%;transform:scaleX(1.0741);">Your balance is 150 us dollars.</div>
<div class="t" style="top:1170.00rem;font-size:19.3rem;color:#444;left:1507.44rem;transform-origin:0 50%;transform:scaleX(1.2825);">4</div>
<div class="b" style="left:1537.0rem;top:1163.1rem;width:46.8rem;height:46.8rem;background:#efefef;border-radius:50%;"></div>
<svg class="b" style="left:1546.4rem;top:1169.5rem;width:28rem;height:34rem;" viewBox="1546.2 707.4 28 34"><g fill="none" stroke="#6d80d0" stroke-width="2.3">
<rect x="1550.6" y="719.5" width="19.2" height="17.6" rx="0.8"/><path d="M1560.2 713V719.6"/><path d="M1556.4 732.3H1564" stroke-linecap="round"/></g>
<circle cx="1560.2" cy="712.2" r="2.1" fill="#6d80d0"/><circle cx="1556.2" cy="725.8" r="1.3" fill="#6d80d0"/><circle cx="1564.1" cy="725.8" r="1.3" fill="#6d80d0"/></svg>
<div class="b" style="left:1600rem;top:1163rem;width:661rem;height:70.8rem;background:#efefef;border-radius:0 35.4rem 35.4rem 35.4rem;"></div>
<div class="t" style="top:1185.00rem;font-size:22.2rem;color:#111;left:1631.38rem;transform-origin:0 50%;transform:scaleX(1.1234);">Should i repeat or can i help you with something else?</div>
<svg class="b" style="left:1505rem;top:1201rem;width:50rem;height:36.5rem;" viewBox="1505 1201 50 36.5"><path d="M1511.4 1203V1203.5A36 30 0 0 0 1547.5 1233.5" fill="none" stroke="#cdcdcd" stroke-width="1.1"/></svg>
<div class="b" style="left:2660.2rem;top:1263.5rem;width:47rem;height:47rem;background:#e6f0ff;border-radius:50%;"></div>
<svg class="b" style="left:1560rem;top:785rem;width:120rem;height:140rem;" viewBox="1560 785 120 140"><path d="M1573.7 795.8C1587.9 838.5 1615.1 871.3 1652 897.5" fill="none" stroke="#d6487c" stroke-width="4.9"/>
<path d="M1668.8 913.4L1641.6 907.4L1657.6 888.8Z" fill="#d6487c"/></svg>
<div class="b" style="left:2720rem;top:190rem;width:30rem;height:1078rem;background:#fafafa;border-left:1rem solid #e6e6e6;border-right:1rem solid #ededed;"></div>
<div class="b" style="left:2728.4rem;top:192rem;width:15.4rem;height:736.6rem;background:#c1c1c1;border-radius:8rem;"></div>
</section>
<header>
<div class="b" style="left:66rem;top:64rem;width:2700rem;height:126rem;background:#fff;box-shadow:0 3rem 11rem rgba(0,0,0,.22);"></div>
<div class="b" style="left:66rem;top:64rem;width:16rem;height:126rem;background:linear-gradient(90deg,rgba(0,0,0,.115),rgba(0,0,0,.045) 40%,rgba(0,0,0,0));"></div>
<svg class="b" style="left:100rem;top:100rem;width:46rem;height:42rem;" viewBox="100 100 46 42"><g fill="none" stroke="#6d80d0" stroke-width="2.8">
<rect x="107.3" y="105.9" width="31.5" height="23.2"/>
<path d="M123 129.1V135M112.4 135.6H133.7"/>
<path d="M114.6 123L121.3 116.7L124.4 119L133 111.8" stroke-width="2.7"/></g></svg>
<div class="t" style="top:109.00rem;font-size:37.15rem;color:#7777b9;left:166.42rem;transform-origin:0 50%;transform:scaleX(1.2047);">Monitor</div>
<div class="b" style="left:1497rem;top:123rem;width:51rem;height:19rem;background:#b5d1fb;border-radius:9.5rem;"></div>
<div class="b" style="left:1522rem;top:119.4rem;width:26rem;height:26rem;background:#2d6fec;border-radius:50%;box-shadow:0 2rem 3rem rgba(0,0,0,.3);"></div>
<div class="t" style="top:122.00rem;font-size:22.2rem;color:#111;-webkit-text-stroke:0.4rem #111;left:1585.50rem;transform-origin:0 50%;transform:scaleX(1.1475);">Application Layer</div>
<svg class="b" style="left:1791rem;top:118rem;width:22rem;height:22rem;" viewBox="1791 118 22 22"><circle cx="1801.7" cy="128.6" r="8.5" fill="none" stroke="#757575" stroke-width="1.7"/><path d="M1801.9 127V133.2M1799.4 127.2H1801.9M1799.2 133.4H1804.4" stroke="#6a6a6a" stroke-width="1.8" fill="none"/><circle cx="1801.6" cy="123.7" r="1.25" fill="#6a6a6a"/></svg>
<div class="b" style="left:1839.5rem;top:111rem;width:1.6rem;height:46.5rem;background:#cfcfcf;"></div>
<div class="b" style="left:1875rem;top:123rem;width:41.5rem;height:19rem;background:#c6c6c6;border-radius:9.5rem;"></div>
<div class="b" style="left:1865.5rem;top:119.4rem;width:25.5rem;height:25.5rem;background:#fff;border-radius:50%;box-shadow:0 2rem 3rem rgba(0,0,0,.32),0 0 1rem rgba(0,0,0,.25);"></div>
<div class="t" style="top:122.00rem;font-size:22.2rem;color:#111;-webkit-text-stroke:0.4rem #111;left:1953.89rem;transform-origin:0 50%;transform:scaleX(1.1149);">Show Live</div>
<div class="b" style="left:2092.5rem;top:111rem;width:1.6rem;height:46.5rem;background:#cfcfcf;"></div>
<svg class="b" style="left:2118rem;top:105rem;width:50rem;height:46rem;" viewBox="2118 105 50 46"><path d="M2144.5 113.1H2126Q2123.6 113.3 2125.2 115.2L2135.9 128.5V145L2142.4 140V128.8L2147.7 122.6" fill="none" stroke="#909090" stroke-width="3" stroke-linejoin="round"/><circle cx="2153.5" cy="115.5" r="6.4" fill="#5593ec"/></svg>
<div class="b" style="left:2183.2rem;top:111rem;width:1.8rem;height:46.8rem;background:#cfcfcf;"></div>
<div class="t" style="top:87.00rem;font-size:18.82rem;color:#555;left:2212.57rem;transform-origin:0 50%;transform:scaleX(1.1026);">Search by</div>
<div class="t" style="top:118.00rem;font-size:22.2rem;color:#222;left:2209.38rem;transform-origin:0 50%;transform:scaleX(1.1371);">Dialog ID</div>
<svg class="b" style="left:2398.5rem;top:123.5rem;width:11rem;height:9rem;" viewBox="0 0 11 9"><path d="M0.5 0.5H10.5L5.5 8.5Z" fill="#555"/></svg>
<div class="b" style="left:2210rem;top:156rem;width:209rem;height:1rem;background:#c8c8c8;"></div>
<div class="t" style="top:117.00rem;font-size:22.2rem;color:#c9c9c9;left:2433.95rem;transform-origin:0 50%;transform:scaleX(1.1189);">paste your ID</div>
<div class="b" style="left:2434rem;top:155.8rem;width:316rem;height:1.5rem;background:#6a6a6a;"></div>
<svg class="b" style="left:2722rem;top:109rem;width:30rem;height:30rem;" viewBox="2722 110 30 30"><circle cx="2734.3" cy="122.8" r="8.4" fill="none" stroke="#666" stroke-width="1.7"/><path d="M2740.3 128.9L2747 135.6" stroke="#666" stroke-width="1.9"/></svg>
</header>
<nav aria-label="Sidebar">
<div class="b" style="left:0rem;top:64rem;width:66rem;height:1204rem;background:#fff;"></div>
<div class="b" style="left:0rem;top:64rem;width:66rem;height:74rem;background:#e8f1fe;"></div>
<div class="b" style="left:0rem;top:138rem;width:66rem;height:1rem;background:#e3ebfa;"></div>
<div class="b" style="left:0rem;top:214rem;width:66rem;height:1rem;background:#e9eefa;"></div>
<div class="b" style="left:0rem;top:290rem;width:66rem;height:1rem;background:#e9eefa;"></div>
<div class="b" style="left:0rem;top:1218rem;width:66rem;height:1rem;background:#dcdcdc;"></div>
<svg class="b" style="left:0rem;top:64rem;width:66rem;height:240rem;" viewBox="0 64 66 240">
<g fill="none" stroke="#6d80d0" stroke-width="1.95" stroke-linejoin="miter">
<rect x="16.1" y="88" width="20.8" height="16.4"/>
<path d="M26.5 104.4V108M19.3 108.3H33.8"/>
<path d="M21.2 100.4L25.2 96.4L27.5 97.9L33.4 92.2" stroke-width="1.9"/>
<path d="M26.5 162.8A10.7 10.7 0 1 0 37.2 173.5H26.5Z"/>
<path d="M29.6 161.2A9.6 9.6 0 0 1 38.6 170.6H29.6Z"/>
<path d="M26.5 238.4V252.2M19.9 245.8L26.5 252.4L33.1 245.8"/>
<path d="M15 255V260.7H38V255"/>
</g></svg>
<svg class="b" style="left:0rem;top:1240rem;width:66rem;height:28rem;" viewBox="0 1240 66 28"><path d="M18.5 1246l6.3 6.3-6.3 6.3M25.7 1246l6.3 6.3-6.3 6.3" fill="none" stroke="#888" stroke-width="1.9"/></svg>
</nav>
<nav aria-label="Breadcrumb">
<div class="b" style="left:0rem;top:0rem;width:2766rem;height:64rem;background:#fff;border-bottom:1rem solid #d2d2d2;"></div>
<svg class="b" style="left:10rem;top:14rem;width:24rem;height:22rem;" viewBox="10 14 24 22"><path d="M12.3 25.4L21.4 17.2L30.5 25.4M26.5 20.8V17.6" fill="none" stroke="#2272ec" stroke-width="2.2" stroke-linecap="round" stroke-linejoin="round"/><path d="M21.4 20.9L28.3 26.9V32.2Q28.3 32.9 27.6 32.9H23.7V28H19.2V32.9H15.2Q14.5 32.9 14.5 32.2V26.9Z" fill="#2272ec"/></svg>
<svg class="b" style="left:46rem;top:16rem;width:14rem;height:20rem;" viewBox="46 16 14 20"><path d="M49.6 19.6L56.2 25.6L49.6 31.6" fill="none" stroke="#666" stroke-width="2.3"/></svg>
<div class="t" style="top:14.00rem;font-size:23.16rem;color:#2272ec;left:73.64rem;transform-origin:0 50%;transform:scaleX(1.1306);">Insights</div>
<svg class="b" style="left:178rem;top:16rem;width:14rem;height:20rem;" viewBox="178 16 14 20"><path d="M181.7 19.6L188.3 25.6L181.7 31.6" fill="none" stroke="#666" stroke-width="2.3"/></svg>
<div class="t" style="top:14.00rem;font-size:23.16rem;color:#222;left:206.86rem;transform-origin:0 50%;transform:scaleX(1.1527);">Monitor</div>
</nav>
<div class="b" style="left:435rem;top:1290rem;width:1785rem;height:60rem;border-radius:30rem;box-shadow:0 0 70rem 10rem rgba(0,0,0,.30);pointer-events:none;"></div>
<div class="b" style="left:0;top:0;width:2766rem;height:4rem;background:linear-gradient(180deg,#f7f7f7,#fafafa 50%,#fff);"></div>
</body></html>
